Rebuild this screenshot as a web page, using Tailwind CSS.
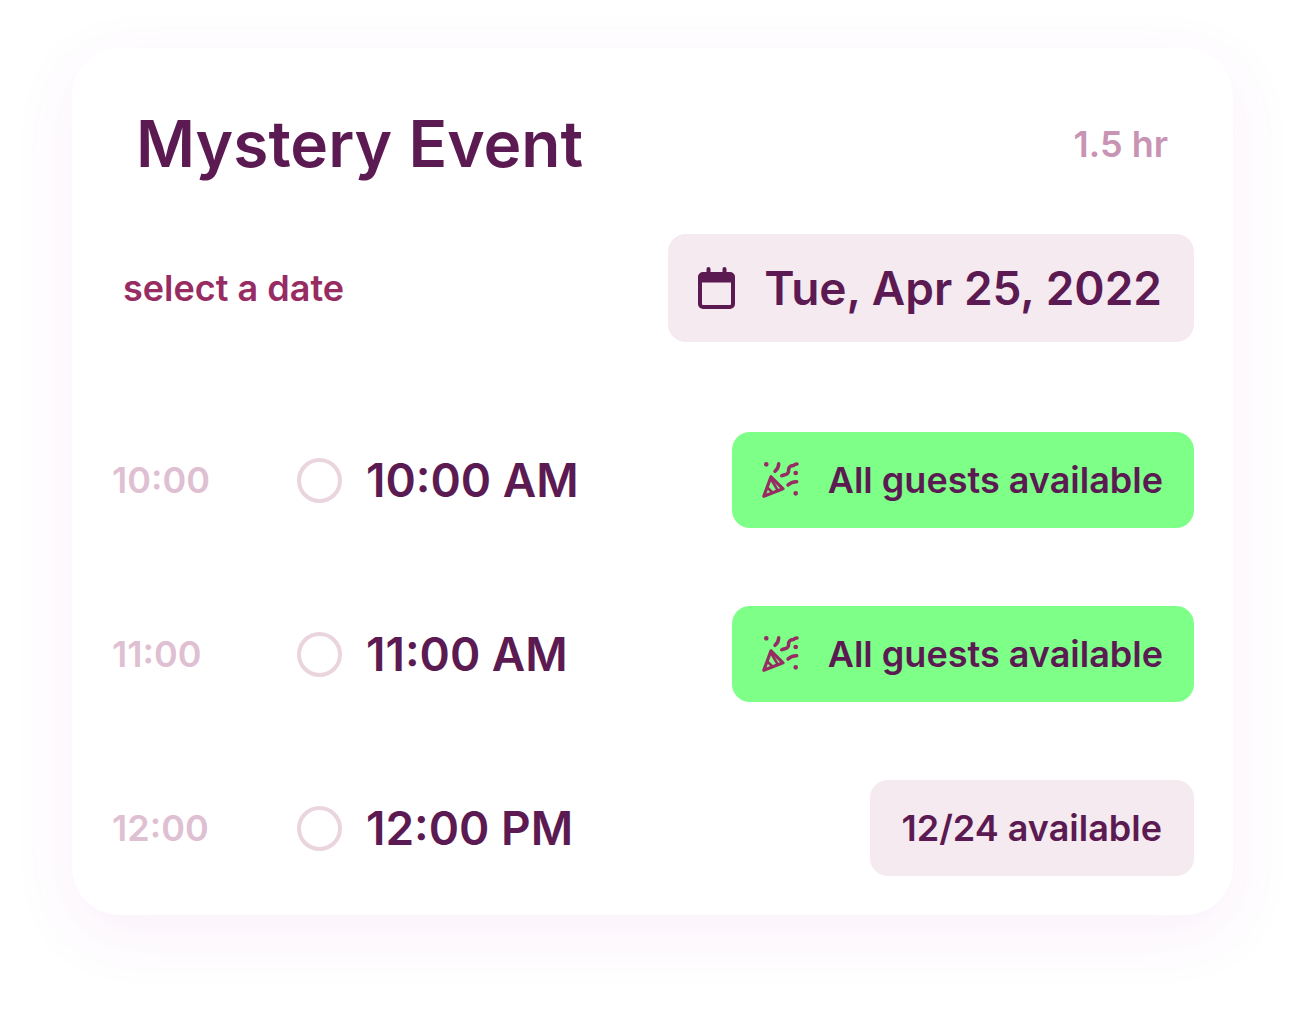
<!DOCTYPE html>
<html lang="en">
<head>
  <meta charset="UTF-8" />
  <title>Mystery Event</title>
  <script src="https://cdn.jsdelivr.net/npm/@tailwindcss/browser@4"></script>
</head>
<body class="bg-white font-['Inter',sans-serif] font-semibold text-[#5c1a52] px-[72px] pt-12 pb-24">

  <main class="bg-white rounded-[48px] pl-10 pr-[39px] pt-[55px] pb-[39px] shadow-[0_18px_64px_rgba(190,70,185,0.08)]">

    <!-- HEADER -->
    <header class="flex items-center justify-between pl-6 pr-[26px]">
      <h1 class="text-[64px] leading-[82px]">Mystery Event</h1>
      <span class="text-4xl text-[#c994b3]">1.5 hr</span>
    </header>

    <!-- DATE -->
    <div class="flex items-center justify-between mt-[49px] pl-[11px]">
      <label for="date" class="text-4xl text-[#972c63]">select a date</label>
      <button id="date" type="button" class="flex items-center gap-7 h-[108px] pl-7 pr-8 rounded-[18px] bg-[#f5eaef] text-[46px]">
        <svg class="w-10 h-[42px]" viewBox="0 0 40 42" fill="none" stroke="currentColor" stroke-width="4" stroke-linecap="round" stroke-linejoin="round">
          <rect x="4" y="7" width="33" height="33" rx="3" />
          <path d="M4 9h33v5H4z" fill="currentColor" stroke-width="3" />
          <path d="M12.500 2v6M28.500 2v6" />
        </svg>
        Tue, Apr 25, 2022
      </button>
    </div>

    <!-- TIME SLOTS -->
    <div class="flex flex-col gap-[78px] mt-[90px]">
      <div class="flex items-center h-24">
        <span class="w-[185px] text-4xl text-[#dfbfd2]">10:00</span>
        <input id="t10" type="radio" name="slot" class="appearance-none size-[45px] rounded-full border-4 border-[#ead5df]" />
        <label for="t10" class="ml-6 text-[46px]">10:00 AM</label>
        <span class="flex items-center gap-7 ml-auto h-24 pl-7 pr-[31px] rounded-[18px] bg-[#7dff88] text-4xl">
          <svg class="size-10 text-[#972c63]" viewBox="0 0 40 40" fill="none" stroke="currentColor" stroke-width="3.500" stroke-linecap="round" stroke-linejoin="round">
            <path d="M11 16.800 3.800 36.200 23 28.800z" stroke-width="3.200" />
            <path d="M7.300 27.500l5.200 5M11 19l6.500 11" stroke-width="2.500" />
            <path d="M18.700 3.700Q18.700 8 15 11.300M21.700 15.700C25 14 28.300 15.500 28.600 11C28 6 32 5.500 33.500 5.500Q35 4 37 4M28 25Q31.500 21.500 36.700 21.700" />
            <path d="M6.300 4.300h.01M35.700 13h.01M35.700 33.300h.01" stroke-width="4.700" />
          </svg>
          All guests available
        </span>
      </div>
      <div class="flex items-center h-24">
        <span class="w-[185px] text-4xl text-[#dfbfd2]">11:00</span>
        <input id="t11" type="radio" name="slot" class="appearance-none size-[45px] rounded-full border-4 border-[#ead5df]" />
        <label for="t11" class="ml-6 text-[46px]">11:00 AM</label>
        <span class="flex items-center gap-7 ml-auto h-24 pl-7 pr-[31px] rounded-[18px] bg-[#7dff88] text-4xl">
          <svg class="size-10 text-[#972c63]" viewBox="0 0 40 40" fill="none" stroke="currentColor" stroke-width="3.500" stroke-linecap="round" stroke-linejoin="round">
            <path d="M11 16.800 3.800 36.200 23 28.800z" stroke-width="3.200" />
            <path d="M7.300 27.500l5.200 5M11 19l6.500 11" stroke-width="2.500" />
            <path d="M18.700 3.700Q18.700 8 15 11.300M21.700 15.700C25 14 28.300 15.500 28.600 11C28 6 32 5.500 33.500 5.500Q35 4 37 4M28 25Q31.500 21.500 36.700 21.700" />
            <path d="M6.300 4.300h.01M35.700 13h.01M35.700 33.300h.01" stroke-width="4.700" />
          </svg>
          All guests available
        </span>
      </div>
      <div class="flex items-center h-24">
        <span class="w-[185px] text-4xl text-[#dfbfd2]">12:00</span>
        <input id="t12" type="radio" name="slot" class="appearance-none size-[45px] rounded-full border-4 border-[#ead5df]" />
        <label for="t12" class="ml-6 text-[46px]">12:00 PM</label>
        <span class="flex items-center ml-auto h-24 px-8 rounded-[18px] bg-[#f5eaef] text-4xl">12/24 available</span>
      </div>
    </div>
  </main>
</body>
</html>
